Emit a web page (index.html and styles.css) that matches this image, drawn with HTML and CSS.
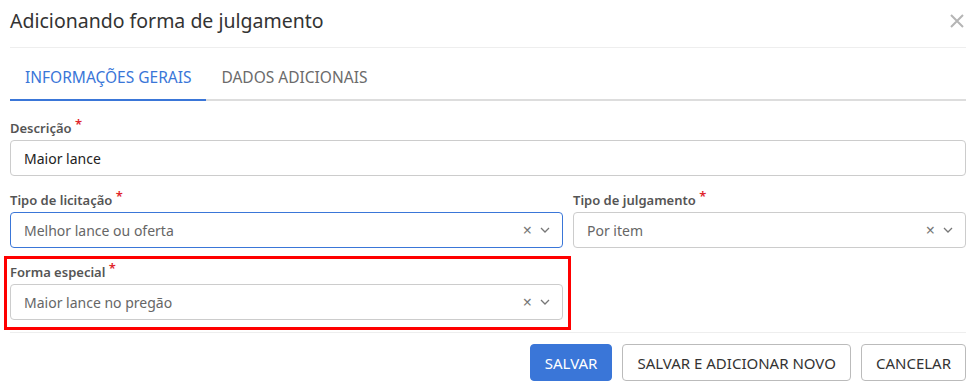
FILE: index.html
```html
<!DOCTYPE html>
<html lang="pt-BR">
<head>
<meta charset="utf-8">
<title>Adicionando forma de julgamento</title>
<link rel="stylesheet" href="styles.css">
</head>
<body>
<div class="modal">
  <header class="modal-header">
    <h1 class="modal-title">Adicionando forma de julgamento</h1>
    <button class="close" aria-label="Fechar">
      <svg width="16" height="16" viewBox="0 0 16 16"><path d="M2 2L14 14M14 2L2 14" stroke="#b5b5b5" stroke-width="2" fill="none"/></svg>
    </button>
  </header>
  <nav class="tabs">
    <span class="tab active">INFORMAÇÕES GERAIS</span>
    <span class="tab">DADOS ADICIONAIS</span>
  </nav>
  <div class="form">
    <div class="field">
      <label class="label">Descrição <span class="req">*</span></label>
      <div class="input">Maior lance</div>
    </div>
    <div class="row">
      <div class="field">
        <label class="label">Tipo de licitação <span class="req">*</span></label>
        <div class="select focused">
          <span class="value">Melhor lance ou oferta</span>
          <span class="icons"><span class="clear">×</span><svg class="chev" width="10" height="6" viewBox="0 0 10 6"><path d="M1 1L5 5L9 1" stroke="#777" stroke-width="1.3" fill="none"/></svg></span>
        </div>
      </div>
      <div class="field">
        <label class="label">Tipo de julgamento <span class="req">*</span></label>
        <div class="select">
          <span class="value">Por item</span>
          <span class="icons"><span class="clear">×</span><svg class="chev" width="10" height="6" viewBox="0 0 10 6"><path d="M1 1L5 5L9 1" stroke="#777" stroke-width="1.3" fill="none"/></svg></span>
        </div>
      </div>
    </div>
    <div class="row">
      <div class="field highlighted">
        <label class="label">Forma especial <span class="req">*</span></label>
        <div class="select">
          <span class="value">Maior lance no pregão</span>
          <span class="icons"><span class="clear">×</span><svg class="chev" width="10" height="6" viewBox="0 0 10 6"><path d="M1 1L5 5L9 1" stroke="#777" stroke-width="1.3" fill="none"/></svg></span>
        </div>
      </div>
    </div>
  </div>
  <footer class="modal-footer">
    <button class="btn primary">SALVAR</button>
    <button class="btn">SALVAR E ADICIONAR NOVO</button>
    <button class="btn">CANCELAR</button>
  </footer>
</div>
</body>
</html>
```
FILE: styles.css
```css
* { box-sizing: border-box; }
html, body { margin: 0; background: #fff; }
body { font-family: "Noto Sans", "Open Sans", sans-serif; color: #333; }
.modal { padding: 0 7px 0 10px; width: 973px; }
.modal-header {
  height: 48px;
  display: flex;
  align-items: center;
  justify-content: space-between;
  border-bottom: 1px solid #eeeeee;
  padding-bottom: 6px;
}
.modal-title { margin: 0; font-size: 19.5px; font-weight: 400; color: #333; }
.close { border: 0; background: none; padding: 0; margin-right: 1px; display: flex; }
.tabs {
  display: flex;
  border-bottom: 2px solid #dddddd;
  height: 53px;
  align-items: stretch;
}
.tab {
  font-size: 15.5px;
  color: #6b6b6b;
  padding: 18px 15px 0 15px;
  margin-bottom: -2px;
  border-bottom: 2px solid transparent;
}
.tab.active { color: #3a76d8; border-bottom-color: #3a76d8; }
.form { padding-top: 18px; }
.row { display: grid; grid-template-columns: 553px 1fr; gap: 10px; }
.field { margin-bottom: 15px; position: relative; }
.label {
  display: block;
  font-size: 13px;
  font-weight: 600;
  color: #555;
  line-height: 18px;
  height: 18px;
  margin-bottom: 3px;
}
.req { color: #e0242b; font-size: 13px; position: relative; top: -4px; }
.input, .select {
  height: 36px;
  border: 1px solid #cccccc;
  border-radius: 4px;
  font-size: 14px;
  display: flex;
  align-items: center;
  padding: 0 12px 0 13px;
}
.input { color: #222; }
.select { color: #666; justify-content: space-between; }
.select.focused { border-color: #3a76d8; }
.icons { display: flex; align-items: center; gap: 8px; color: #777; }
.clear { font-size: 16px; line-height: 1; }
.highlighted { margin-bottom: 12px; }
.highlighted::after {
  content: "";
  position: absolute;
  left: -6px;
  top: -7px;
  right: -8px;
  bottom: -10px;
  border: 3px solid #ff0000;
  pointer-events: none;
}
.modal-footer {
  border-top: 1px solid #eeeeee;
  display: flex;
  justify-content: flex-end;
  gap: 10px;
  padding-top: 11px;
}
.btn {
  font-family: inherit;
  font-size: 15px;
  height: 37px;
  padding: 0 14px;
  background: #fff;
  color: #333;
  border: 1px solid #bbbbbb;
  border-radius: 4px;
}
.btn.primary { background: #3a76d8; border-color: #3a76d8; color: #fff; }
```
